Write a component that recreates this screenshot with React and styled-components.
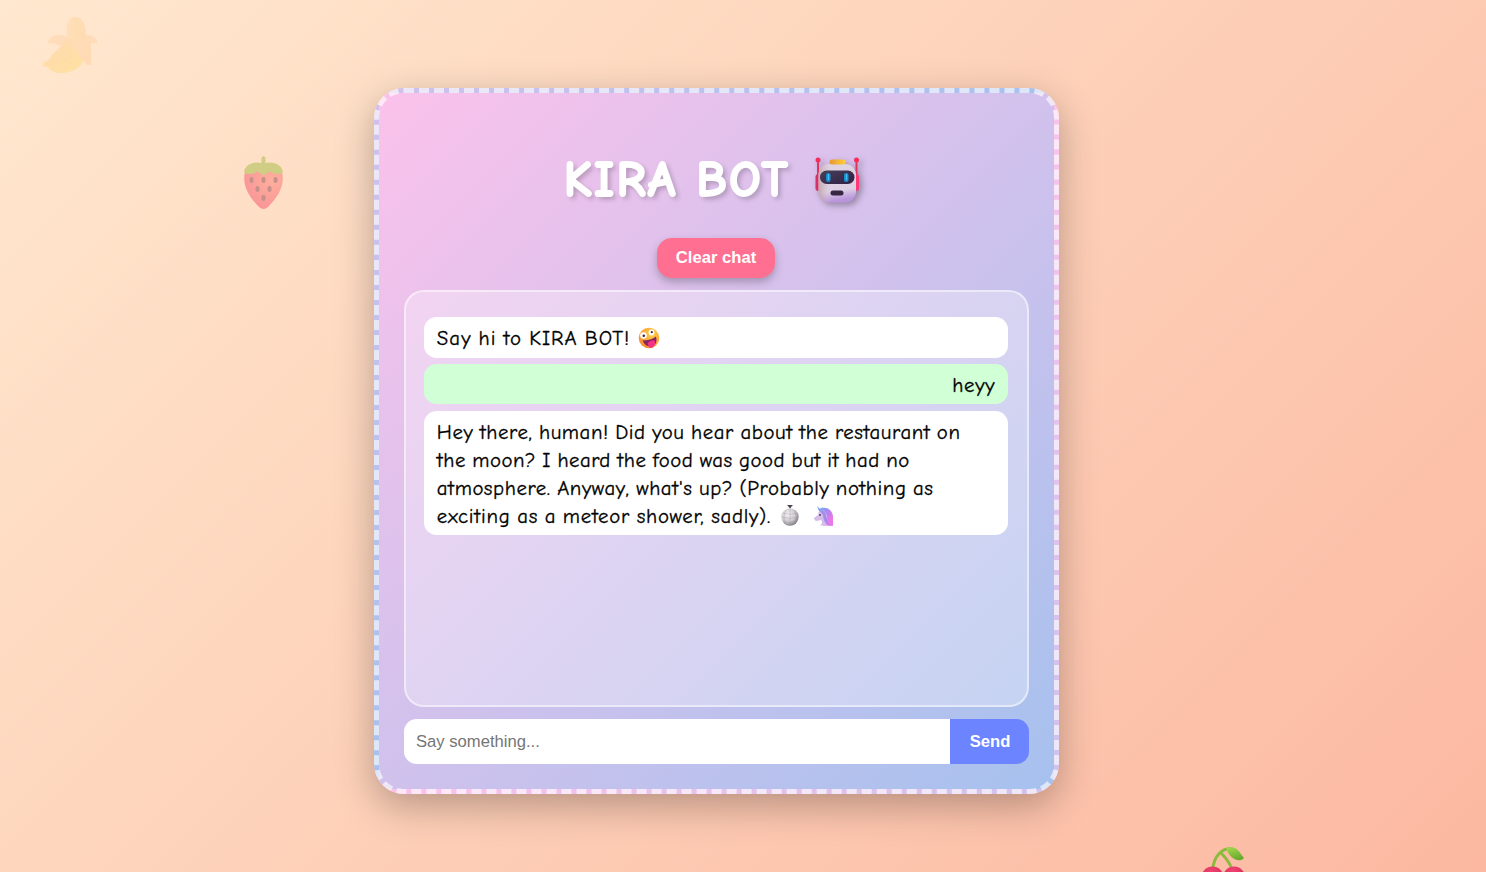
import React from "react";
import styled, { createGlobalStyle } from "styled-components";

const comic = '"Comic Sans MS", "Comic Neue", "Noto Sans", sans-serif';
const arial = '"Liberation Sans", Arial, sans-serif';

const Global = createGlobalStyle`
  * { box-sizing: border-box; }
  body { margin: 0; }
`;

const Page = styled.main`
  position: relative;
  display: flex;
  justify-content: center;
  align-items: flex-start;
  height: 872px;
  padding: 88px 53px 0 0;
  overflow: hidden;
  font-family: ${comic};
  background: linear-gradient(135deg, #ffe8cf, #fcb8a1);
`;

const Card = styled.section`
  display: flex;
  flex-direction: column;
  align-items: center;
  width: 685px;
  height: 706px;
  padding: 25px;
  border: 5px dashed rgba(255, 255, 255, 0.62);
  border-radius: 30px;
  background: linear-gradient(135deg, #fbc2eb, #a6c1ee);
  box-shadow: 0 12px 38px rgba(0, 0, 0, 0.28);
`;

const Title = styled.h1`
  display: flex;
  align-items: center;
  gap: 23px;
  height: 66px;
  margin: 30px 6.5px 0 0;
  color: #fff;
  font-size: 50px;
  line-height: 65px;
  font-weight: 700;
  text-shadow: 3px 3px 5px rgba(0, 0, 0, 0.25);
`;

const TitleText = styled.span`
  height: 66px;
  letter-spacing: 2.1px;
  word-spacing: -1px;
  white-space: nowrap;
  -webkit-text-stroke: 1.8px #fff;
`;

const RobotIcon = styled.svg`
  width: 50px;
  height: 48px;
  overflow: visible;
  filter: drop-shadow(3px 3px 3px rgba(0, 0, 0, 0.3));
`;

const ClearButton = styled.button`
  flex: none;
  width: 118px;
  height: 40px;
  margin: 24px 1px 12px 0;
  padding: 0 0 1px;
  border: 0;
  border-radius: 15px;
  color: #fff;
  background: #ff6f91;
  box-shadow: 0 4px 8px rgba(0, 0, 0, 0.25);
  font: 700 16.64px ${arial};
`;

const Chat = styled.div`
  display: flex;
  flex-direction: column;
  gap: 6.2px;
  width: 625px;
  height: 417px;
  flex: none;
  padding: 25px 19px 0 18px;
  border: 2px solid rgba(255, 255, 255, 0.5);
  border-radius: 20px;
  background: rgba(255, 255, 255, 0.3);
`;

const Bubble = styled.div`
  display: flex;
  flex-direction: column;
  align-items: ${(p) => (p.$mine ? "flex-end" : "flex-start")};
  padding: 7.3px 12.8px 5.3px;
  border-radius: 12.5px;
  color: #000;
  background: ${(p) => (p.$mine ? "#d1ffd6" : "#fff")};
  font-size: 20.8px;
  line-height: 28px;
`;

const Line = styled.span`
  display: flex;
  align-items: center;
  height: 28px;
  white-space: pre;
  letter-spacing: ${(p) => p.$track}px;
  word-spacing: -1px;
  -webkit-text-stroke: 0.3px #000;
`;

const Emoji = styled.svg`
  width: 22px;
  height: 22px;
  margin-left: ${(p) => p.$gap}px;
  overflow: visible;
`;

const Form = styled.div`
  display: flex;
  flex: none;
  width: 625px;
  height: 45px;
  margin-top: 12px;
`;

const Field = styled.input`
  flex: 1;
  min-width: 0;
  padding: 0 12px;
  border: 0;
  border-radius: 12.5px 0 0 12.5px;
  background: #fff;
  font: 16.64px ${arial};
  &::placeholder { color: #757575; opacity: 1; }
`;

const Send = styled.button`
  width: 79px;
  padding: 0 0 0 1px;
  border: 0;
  border-radius: 0 12.5px 12.5px 0;
  color: #fff;
  background: #6c84ff;
  font: 700 16.64px ${arial};
`;

const Fruit = styled.svg`
  position: absolute;
  left: ${(p) => p.$x}px;
  top: ${(p) => p.$y}px;
  width: ${(p) => p.$w}px;
  height: ${(p) => p.$h}px;
  opacity: ${(p) => p.$o};
`;

function Banana() {
  return (
    <Fruit $x={43} $y={17} $w={55} $h={57} $o={0.3} viewBox="0 0 55 57">
      <defs>
        <linearGradient id="peel" x2="0.7" y2="1">
          <stop stopColor="#ffbd75" /><stop offset="1" stopColor="#ffd545" />
        </linearGradient>
        <linearGradient id="flesh" x2="1">
          <stop stopColor="#ffd38d" /><stop offset="1" stopColor="#ffc46f" />
        </linearGradient>
      </defs>
      <path d="M24 20C14 15 7 19 4 26C10 26 14 27 18 29C21 27 23 26 25 24Z" fill="#ffc691" />
      <path d="M40 19C47 16 53 20 55 26C51 27 46 25 43 26L38 22Z" fill="#ffc691" />
      <path d="M24 22C22 7 25 0 32 0C40 0 44 9 42 22Q34 26 24 22Z" fill="url(#flesh)" />
      <path d="M23 22C20 30 9 35 6 43L1 45L0 49L5 50C9 58 25 58 36 50C42 46 41 37 36 28Z" fill="url(#peel)" />
      <path d="M5 48C16 47 29 42 38 32" fill="none" stroke="#ffc04c" strokeWidth="1" />
      <path d="M23 21Q34 24 45 20Q49 22 48 30L48 48L44 48L36 39C33 32 29 27 23 21Z" fill="#ffc282" />
    </Fruit>
  );
}

function Strawberry() {
  return (
    <Fruit $x={243} $y={155} $w={41} $h={55} $o={0.5} viewBox="0 0 41 55">
      <defs>
        <radialGradient id="berry" cx="0.72" cy="0.25" r="0.8">
          <stop stopColor="#ff8175" /><stop offset="1" stopColor="#f64d6a" />
        </radialGradient>
      </defs>
      <path d="M2 17C6 14 35 14 39 17C42 30 36 41 25 52Q20.500 56 16 52C5 41-1 30 2 17Z" fill="url(#berry)" />
      <path d="M18.500 3Q20.500-1 22.500 3L22.500 8C31 6 39 10 40 17Q39 19 36 19C32 19 30 19 27 16C26 19 24 16 20.500 21C17 16 15 19 14 16C11 19 8 19 5 19Q2 19 1 17C2 10 10 6 18.500 8Z" fill="#a2bd45" />
      <g fill="#92444e">
        <rect x="6.500" y="22" width="4" height="6" rx="2" /><rect x="18.500" y="22" width="4" height="6" rx="2" />
        <rect x="30.500" y="22" width="4" height="6" rx="2" /><rect x="12.500" y="31" width="4" height="6" rx="2" />
        <rect x="24.500" y="31" width="4" height="6" rx="2" /><rect x="18.500" y="40" width="4" height="6" rx="2" />
      </g>
    </Fruit>
  );
}

function Cherries() {
  return (
    <Fruit $x={1202} $y={846} $w={43} $h={57} $o={0.95} viewBox="0 0 43 57">
      <defs>
        <linearGradient id="leaf" x2="0.4" y2="1"><stop stopColor="#a4d94c" /><stop offset="1" stopColor="#62ab27" /></linearGradient>
        <radialGradient id="cherry" cx="0.45" cy="0.2" r="0.8"><stop stopColor="#f13d70" /><stop offset="1" stopColor="#c81d4d" /></radialGradient>
      </defs>
      <path d="M10.500 24C12 10 20 1 31 3M19 7Q27 15 30 23" fill="none" stroke="#86bb37" strokeWidth="3" />
      <path d="M24 2C35-1 37 6 42 12C38 17 28 14 24 2Z" fill="url(#leaf)" />
      <circle cx="10.500" cy="31.500" r="11" fill="url(#cherry)" /><circle cx="32" cy="31.500" r="11" fill="url(#cherry)" />
    </Fruit>
  );
}

function Robot() {
  return (
    <RobotIcon viewBox="0 0 50 48" aria-label="robot">
      <defs>
        <linearGradient id="face" x1="0" y1="0" x2="0.15" y2="1">
          <stop stopColor="#e0d3e0" /><stop offset="0.75" stopColor="#ddd0e4" /><stop offset="1" stopColor="#b995dc" />
        </linearGradient>
        <linearGradient id="side" x2="1">
          <stop stopColor="#b99494" stopOpacity="0.7" /><stop offset="0.35" stopColor="#d8c8d4" stopOpacity="0" />
        </linearGradient>
        <linearGradient id="cap" x2="1"><stop stopColor="#e69635" /><stop offset="1" stopColor="#ffcf34" /></linearGradient>
        <linearGradient id="visor" x2="1" y2="1"><stop stopColor="#484058" /><stop offset="1" stopColor="#302044" /></linearGradient>
      </defs>
      <path d="M5 3V20M43.500 3V20" stroke="#e43260" strokeWidth="2" />
      <circle cx="5" cy="3" r="2.500" fill="#f72d5c" /><circle cx="43.500" cy="3" r="2.500" fill="#f72d5c" />
      <rect x="2.500" y="17" width="6" height="17" rx="3" fill="#d92e69" /><rect x="40" y="17" width="6" height="17" rx="3" fill="#ff3878" />
      <rect x="5.500" y="7" width="37.500" height="38.500" rx="11" fill="url(#face)" />
      <rect x="5.500" y="7" width="37.500" height="38.500" rx="11" fill="url(#side)" />
      <rect x="7" y="13.500" width="34.500" height="13.500" rx="6.700" fill="url(#visor)" />
      <rect x="13" y="16" width="4.500" height="9" rx="2.200" fill="#168ed0" /><rect x="31" y="16" width="4.500" height="9" rx="2.200" fill="#168ed0" />
      <path d="M15.500 17V23M33.500 17V23" stroke="#42bdf1" strokeWidth="1.300" />
      <rect x="17.500" y="33.500" width="13" height="5" rx="2.500" fill="#382743" />
      <rect x="16.500" y="2.500" width="16" height="5" rx="2.500" fill="url(#cap)" />
    </RobotIcon>
  );
}

function Zany() {
  return (
    <Emoji $gap={8} viewBox="0 0 22 22" aria-label="zany face">
      <defs><radialGradient id="zany" cx="0.65" cy="0.3" r="0.75"><stop stopColor="#ffd147" /><stop offset="1" stopColor="#f68b31" /></radialGradient></defs>
      <circle cx="11" cy="11" r="10.300" fill="url(#zany)" />
      <circle cx="5.500" cy="8.500" r="3.300" fill="#fff" /><circle cx="13.500" cy="5.500" r="2.900" fill="#fff" />
      <circle cx="5.800" cy="8.800" r="1.300" fill="#432941" /><circle cx="13.800" cy="5.200" r="1.100" fill="#432941" />
      <path d="M4.500 13.500Q13 13.500 18 9.500Q20 17 14 19Q8 21 4.500 13.500Z" fill="#87235e" />
      <path d="M9.500 16Q14 12 17 14Q18 20 12 21Q10 19 9.500 16Z" fill="#f43183" />
    </Emoji>
  );
}

function DiscoBall() {
  return (
    <Emoji $gap={8} viewBox="0 0 22 22" aria-label="mirror ball">
      <defs><radialGradient id="disco" cx="0.38" cy="0.35" r="0.65"><stop stopColor="#f3f1f2" /><stop offset="0.65" stopColor="#cdc9cd" /><stop offset="1" stopColor="#8b858e" /></radialGradient></defs>
      <path d="M8 0H14L12.500 1.500L11.500 3H10.500L9.500 1.500Z" fill="#493f50" />
      <circle cx="11" cy="12" r="8.700" fill="url(#disco)" />
      <path d="M4 8Q11 10.500 18 8M3 12Q11 14.500 19 12M4 16Q11 19 18 16M11 3.500V20.500M7 5Q3 12.500 7 19.500M15 5Q19 12.500 15 19.500" fill="none" stroke="#8f8a91" strokeWidth="0.300" />
    </Emoji>
  );
}

function Unicorn() {
  return (
    <Emoji $gap={12} viewBox="0 0 22 22" aria-label="unicorn">
      <defs><linearGradient id="mane" x1="0" y1="0" x2="0.8" y2="1"><stop stopColor="#67a9f1" /><stop offset="0.5" stopColor="#bc81f0" /><stop offset="1" stopColor="#ff75de" /></linearGradient></defs>
      <path d="M6 4C15 0 20 7 20 12V20.500H10Z" fill="url(#mane)" />
      <path d="M4 1L8 5L6 6Z" fill="#719cf0" /><path d="M9 2L12 5L8 6Z" fill="#8aa7ee" />
      <path d="M6 6Q12 4 14 11Q15 17 13 20.500H7Q11 17 8 15L4 16Q1 16 1 13L5 10Z" fill="#d6bde8" />
      <path d="M6 5Q13 5 13 11Q15 17 20 20.500H15Q10 16 10 10Z" fill="#a18df0" />
      <path d="M14 12Q19 14 20 10V20.500H16Q14 17 14 12Z" fill="#eb78e8" />
      <circle cx="7" cy="10" r="0.900" fill="#56355d" />
    </Emoji>
  );
}

export default function App() {
  return (
    <>
      <Global />
      <Page>
        <Banana />
        <Strawberry />
        <Card>
          <Title><TitleText>KIRA BOT</TitleText><Robot /></Title>
          <ClearButton>Clear chat</ClearButton>
          <Chat>
            <Bubble><Line $track={1.08}>Say hi to KIRA BOT!<Zany /></Line></Bubble>
            <Bubble $mine><Line $track={0.7}>heyy</Line></Bubble>
            <Bubble>
              <Line $track={0.57}>Hey there, human! Did you hear about the restaurant on</Line>
              <Line $track={0.5}>the moon? I heard the food was good but it had no</Line>
              <Line $track={0.58}>atmosphere. Anyway, what's up? (Probably nothing as</Line>
              <Line $track={0.74}>exciting as a meteor shower, sadly).<DiscoBall /><Unicorn /></Line>
            </Bubble>
          </Chat>
          <Form><Field placeholder="Say something..." /><Send>Send</Send></Form>
        </Card>
        <Cherries />
      </Page>
    </>
  );
}
